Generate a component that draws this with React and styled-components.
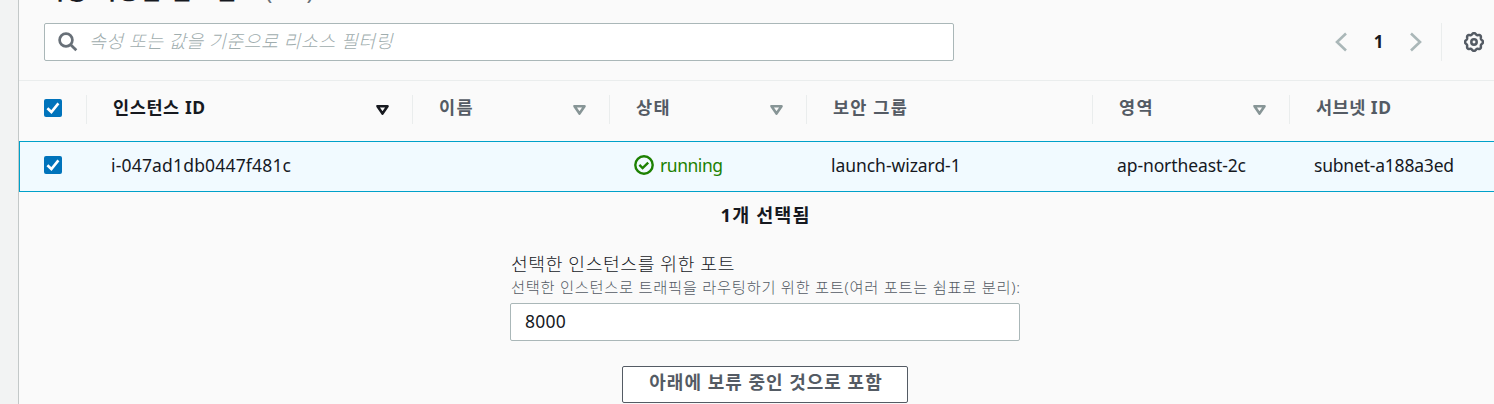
import React from "react";
import styled, { createGlobalStyle } from "styled-components";

const Global = createGlobalStyle`
  *{box-sizing:border-box}
  html,body{margin:0;overflow:hidden}
  body{background:#f2f3f3;color:#16191f;font-family:"Noto Sans","Noto Sans CJK KR",sans-serif;font-size:17.5px}
`;
const Page = styled.div`height:404px;display:flex;padding-left:18px;overflow:hidden;`;
const Panel = styled.main`flex:1;min-width:0;background:#fafafa;border-left:1px solid #c3c8c8;display:flex;flex-direction:column;`;
const Fit = styled.span`
  display:inline-flex;flex:none;white-space:nowrap;
  svg{display:block;overflow:visible}
`;
const Text = styled.span`
  flex:none;display:block;white-space:nowrap;line-height:24px;
  font-size:${(p) => p.$size || 17.5}px;
  font-weight:${(p) => p.$weight || 400};
  letter-spacing:${(p) => p.$ls || 0}px;
  color:${(p) => p.$color || "inherit"};
  font-style:${(p) => (p.$italic ? "italic" : "normal")};
`;
const Title = styled.h2`
  margin:0;height:23px;padding-left:25px;display:flex;align-items:flex-end;gap:6px;
  line-height:34px;font-size:23px;font-weight:700;white-space:nowrap;
`;
const Name = styled.span`flex:none;margin-bottom:16px;letter-spacing:1.2px;`;
const Count = styled.span`flex:none;margin-bottom:14px;font-weight:400;font-size:22.5px;color:#687078;`;
const Toolbar = styled.div`height:38px;display:flex;align-items:center;padding:0 10px 0 25px;`;
const Search = styled.div`
  width:910px;height:38px;border:1px solid #aab7b8;border-radius:2px;background:#fff;
  display:flex;align-items:center;padding:0 0 3px 13px;gap:11px;
  svg{margin-top:3px}
`;
const Pager = styled.nav`margin-left:auto;display:flex;align-items:center;height:38px;`;
const PageNumber = styled.b`width:63px;text-align:center;font-size:17px;line-height:36px;`;
const Settings = styled.div`height:38px;margin-left:19px;padding-left:22px;border-left:1px solid #eaeded;display:flex;align-items:center;`;
const headColumns = "68px 326px 197px 197px 286px 197px 204px";
const rowColumns = "67px 326px 197px 197px 286px 197px 205px";
const Head = styled.div`
  margin-top:19px;height:61px;border-top:1px solid #eaeded;
  display:grid;grid-template-columns:${headColumns};
`;
const HeadCell = styled.div`
  height:29px;margin-top:14px;display:flex;align-items:center;justify-content:space-between;
  padding:0 ${(p) => (p.$first ? 0 : 23)}px ${(p) => (p.$first ? 3 : 0)}px ${(p) => (p.$first ? 25 : 26)}px;
  border-right:1px solid ${(p) => (p.$last ? "transparent" : "#eaeded")};
  color:${(p) => (p.$active ? "#16191f" : "#545b64")};
  ${Text}{padding-bottom:5px;line-height:24px}
`;
const Row = styled.div`
  height:51px;border:1px solid #00a1c9;border-right:0;background:#f1faff;
  display:grid;grid-template-columns:${rowColumns};margin-right:-1px;
`;
const Cell = styled.div`
  display:flex;align-items:center;padding:0 0 3px 24px;gap:6px;color:${(p) => p.$color || "#16191f"};
  ${Text}{padding-bottom:1px}
`;
const Box = styled.span`width:18px;height:18px;border-radius:2px;background:#0073bb;display:grid;place-items:center;flex:none;`;
const Form = styled.section`width:510px;margin-left:491px;display:flex;flex-direction:column;align-items:center;`;
const Selected = styled.div`height:60px;padding:11px 0 0 1px;`;
const Label = styled.div`align-self:stretch;height:23px;padding-left:1px;`;
const Hint = styled.div`align-self:stretch;height:28px;padding-left:1px;`;
const Input = styled.div`width:510px;height:38px;border:1px solid #aab7b8;border-radius:2px;background:#fff;padding:5px 14px;`;
const Button = styled.button`
  width:286px;height:37px;margin:25px 0 0;padding:0 0 5px 2px;border:1px solid #545b64;border-radius:2px;background:#fff;
  display:flex;align-items:center;justify-content:center;font-family:inherit;
`;

const Check = () => (
  <Box><svg width="14" height="14" viewBox="0 0 14 14" fill="none" stroke="#fff" strokeWidth="2.6"><path d="M1.4 7.2 5.4 11 12.4 2.4" /></svg></Box>
);
const Sort = ({ active }) => (
  <Fit><svg width="13" height="12" viewBox="0 0 13 12"><path d="M1.5 2.2h10L6.5 9.6z" fill="none" stroke={active ? "#16191f" : "#879596"} strokeWidth="2.6" strokeLinejoin="round" /></svg></Fit>
);
const Chevron = ({ right }) => (
  <Fit><svg width="12" height="20" viewBox="0 0 12 20" fill="none" stroke="#aab7b8" strokeWidth="2.6"><path d={right ? "M1 1.5 10 10 1 18.5" : "M11 1.5 2 10 11 18.5"} /></svg></Fit>
);
const gearPath = (() => {
  const pts = [];
  for (let i = 0; i <= 96; i++) {
    const a = (i / 96) * Math.PI * 2;
    const r = 8.3 + 0.75 * Math.cos(8 * a);
    pts.push(`${(10 + r * Math.cos(a)).toFixed(2)} ${(10 + r * Math.sin(a)).toFixed(2)}`);
  }
  return `M${pts.join("L")}Z`;
})();
const Gear = () => (
  <svg width="20" height="20" viewBox="0 0 20 20" fill="none" stroke="#545b64" strokeWidth="2.5"><path d={gearPath} /><circle cx="10" cy="10" r="2.7" /></svg>
);

const heads = [
  { text: "인스턴스 ID", sort: true, active: true, ls: 0.6 },
  { text: "이름", sort: true, ls: 1.3 },
  { text: "상태", sort: true, ls: 1.3 },
  { text: "보안 그룹", ls: 1.2 },
  { text: "영역", sort: true, ls: 1.3 },
  { text: "서브넷 ID", last: true, ls: 0.5 },
];

export default function App() {
  return (
    <>
      <Global />
      <Page>
        <Panel>
          <Title><Name>사용 가능한 인스턴스</Name><Count>(1/1)</Count></Title>
          <Toolbar>
            <Search>
              <svg width="20" height="20" viewBox="0 0 20 20" fill="none" stroke="#687078" strokeWidth="2.7"><circle cx="8" cy="8" r="6.4" /><path d="m12.7 12.7 5.6 5.6" /></svg>
              <Text $italic $color="#a0adae" $size={18.3} $ls={0.53} $weight={300}>속성 또는 값을 기준으로 리소스 필터링</Text>
            </Search>
            <Pager>
              <Chevron /><PageNumber>1</PageNumber><Chevron right />
              <Settings><Gear /></Settings>
            </Pager>
          </Toolbar>
          <Head>
            <HeadCell $first><Check /></HeadCell>
            {heads.map((h) => (
              <HeadCell key={h.text} $active={h.active} $last={h.last}>
                <Text $weight={700} $ls={h.ls}>{h.text}</Text>{h.sort && <Sort active={h.active} />}
              </HeadCell>
            ))}
          </Head>
          <Row>
            <Cell><Check /></Cell>
            <Cell><Text $ls={0.18}>i-047ad1db0447f481c</Text></Cell>
            <Cell />
            <Cell $color="#1d8102">
              <svg width="20" height="20" viewBox="0 0 20 20" fill="none" stroke="#1d8102" strokeWidth="2.4"><circle cx="10" cy="10" r="8.7" /><path d="m5.4 9.8 3.2 3.2 5.6-5.4" /></svg>
              <Text $ls={-0.45}>running</Text>
            </Cell>
            <Cell><Text $ls={-0.05}>launch-wizard-1</Text></Cell>
            <Cell><Text $ls={-0.1}>ap-northeast-2c</Text></Cell>
            <Cell><Text $ls={-0.2}>subnet-a188a3ed</Text></Cell>
          </Row>
          <Form>
            <Selected><Text $weight={700} $size={18.5} $ls={1.1}>1개 선택됨</Text></Selected>
            <Label><Text $size={18.2} $ls={0.6} $weight={300}>선택한 인스턴스를 위한 포트</Text></Label>
            <Hint><Text $size={15.3} $ls={0.7} $weight={300} $color="#545b64">선택한 인스턴스로 트래픽을 라우팅하기 위한 포트(여러 포트는 쉼표로 분리):</Text></Hint>
            <Input><Text $ls={0.2}>8000</Text></Input>
            <Button><Text $weight={700} $size={18} $ls={1} $color="#545b64">아래에 보류 중인 것으로 포함</Text></Button>
          </Form>
        </Panel>
      </Page>
    </>
  );
}
